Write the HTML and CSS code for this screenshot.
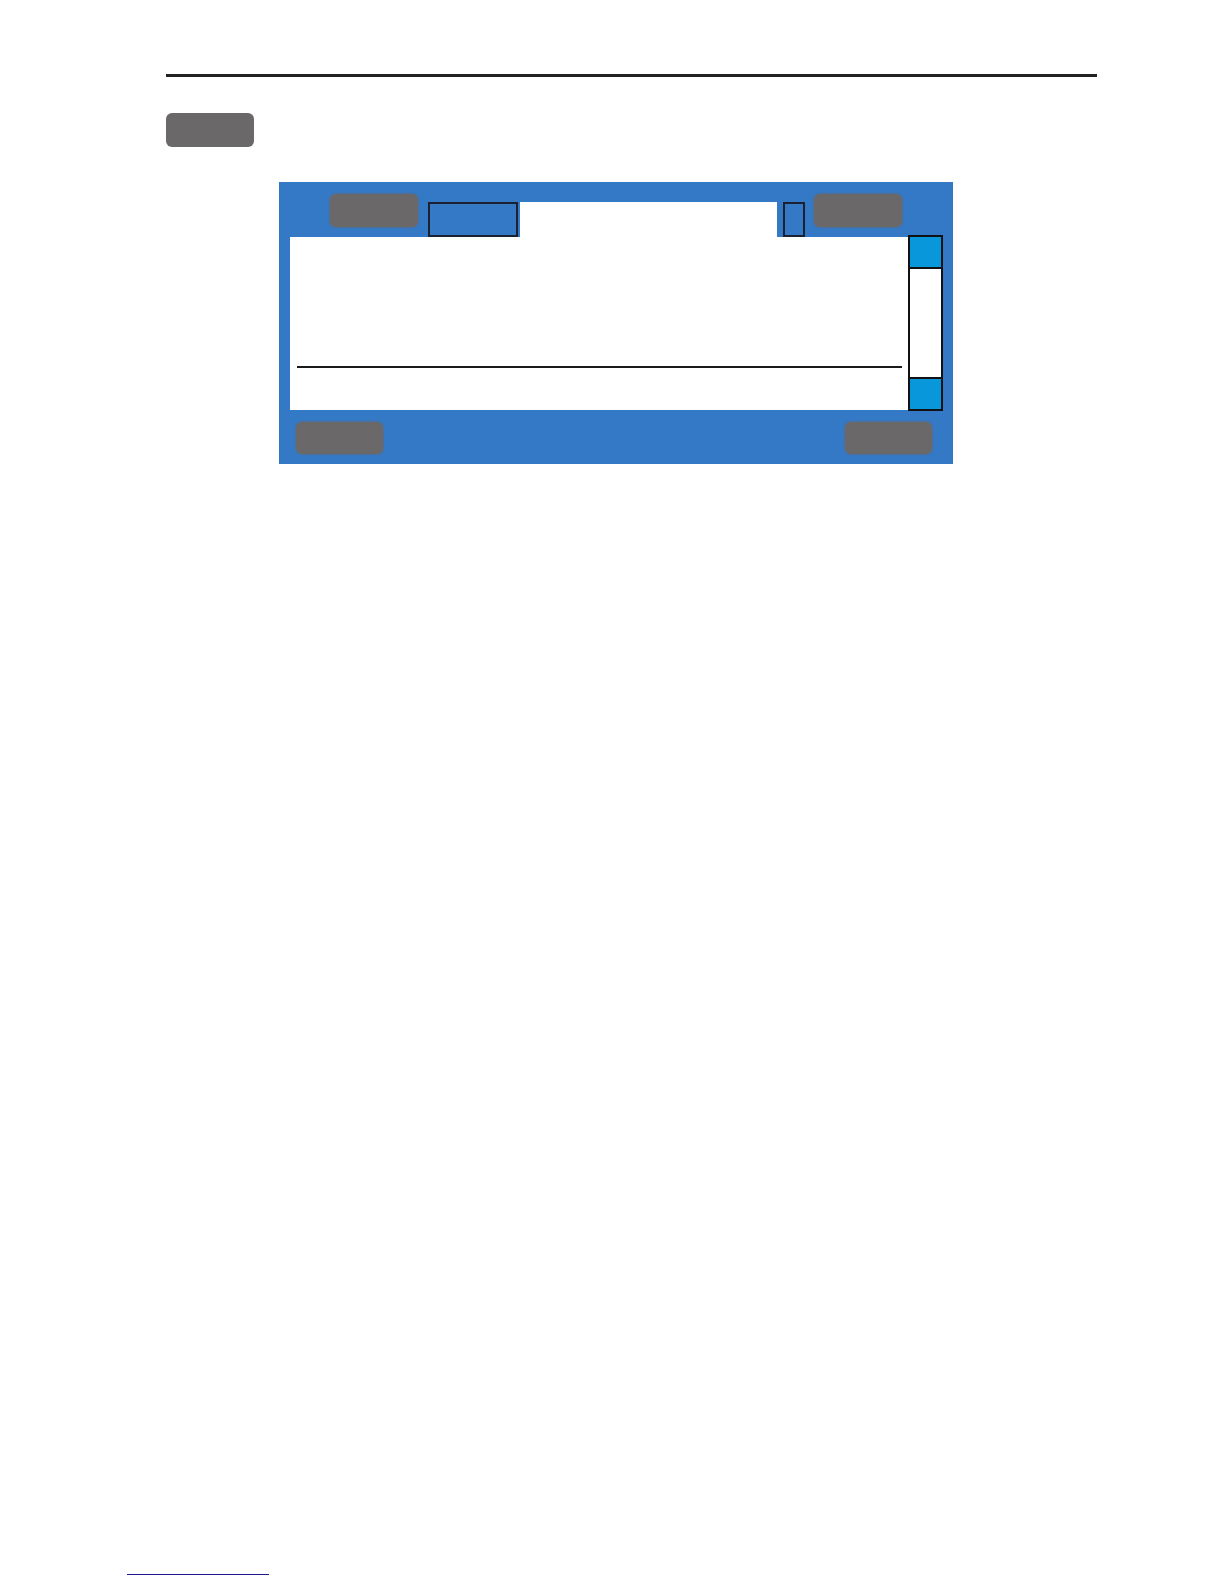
FILE: index.html
```html
<!DOCTYPE html>
<html lang="en">
<head>
<meta charset="utf-8">
<title>Screen</title>
<link rel="stylesheet" href="styles.css">
</head>
<body>
<div class="page">
  <div class="rule"></div>
  <div class="key"></div>
  <div class="panel">
    <div class="panel-head">
      <div class="softkey softkey-top"></div>
      <div class="tab"></div>
      <div class="title-strip"></div>
      <div class="mini-tab"></div>
      <div class="softkey softkey-top softkey-right"></div>
    </div>
    <div class="panel-body">
      <div class="content">
        <div class="divider"></div>
      </div>
      <div class="scrollbar">
        <div class="scroll-btn"></div>
        <div class="scroll-track"></div>
        <div class="scroll-btn"></div>
      </div>
    </div>
    <div class="panel-foot">
      <div class="softkey"></div>
      <div class="softkey"></div>
    </div>
  </div>
  <div class="spacer"></div>
  <div class="link-line"></div>
</div>
</body>
</html>
```

FILE: styles.css
```css
html, body {
  margin: 0;
  padding: 0;
  background: #ffffff;
  font-family: "Liberation Sans", Arial, sans-serif;
}

.page {
  width: 1224px;
  height: 1584px;
  display: flex;
  flex-direction: column;
  overflow: hidden;
}

.rule {
  margin: 74px 0 0 166px;
  width: 931px;
  height: 3px;
  background: #222222;
}

.key {
  margin: 36px 0 0 166px;
  width: 88px;
  height: 34px;
  border-radius: 6px;
  background: #6b6869;
}

.panel {
  margin: 35px 0 0 279px;
  width: 674px;
  height: 282px;
  background: #3479c6;
  display: flex;
  flex-direction: column;
}

.panel-head {
  height: 55px;
  display: flex;
  align-items: flex-start;
  padding-left: 51px;
}

.softkey {
  width: 87px;
  height: 32px;
  border-radius: 6px;
  background: #6b6869;
  box-shadow: 0 0 1px 1px rgba(107, 104, 105, 0.5);
}

.softkey-top {
  width: 88px;
  height: 33px;
  margin-top: 12px;
}

.tab {
  box-sizing: border-box;
  margin: 20px 0 0 10px;
  width: 90px;
  height: 35px;
  border: 2px solid #1b2130;
  background: #3479c6;
}

.title-strip {
  margin: 20px 0 0 2px;
  width: 257px;
  height: 35px;
  background: #ffffff;
}

.mini-tab {
  box-sizing: border-box;
  margin: 20px 0 0 6px;
  width: 22px;
  height: 35px;
  border: 2px solid #1b2130;
  background: #3479c6;
}

.softkey-right {
  margin-left: 9px;
}

.panel-body {
  height: 174px;
  display: flex;
  margin-left: 11px;
}

.content {
  width: 618px;
  height: 173px;
  background: #ffffff;
  display: flex;
  flex-direction: column;
}

.divider {
  margin: 129px 6px 0 7px;
  height: 2px;
  background: #1a1a1a;
}

.scrollbar {
  box-sizing: border-box;
  width: 35px;
  height: 176px;
  margin-top: -2px;
  display: flex;
  flex-direction: column;
}

.scroll-btn {
  box-sizing: border-box;
  height: 34px;
  border: 2px solid #111111;
  background: #0997dc;
}

.scroll-track {
  box-sizing: border-box;
  flex: 1;
  border-left: 2px solid #111111;
  border-right: 2px solid #111111;
  background: #ffffff;
}

.panel-foot {
  display: flex;
  justify-content: space-between;
  padding: 11px 21px 0 17px;
}

.spacer {
  height: 1110px;
}

.link-line {
  margin-left: 127px;
  width: 142px;
  height: 1px;
  background: #1b1b8f;
}
```
